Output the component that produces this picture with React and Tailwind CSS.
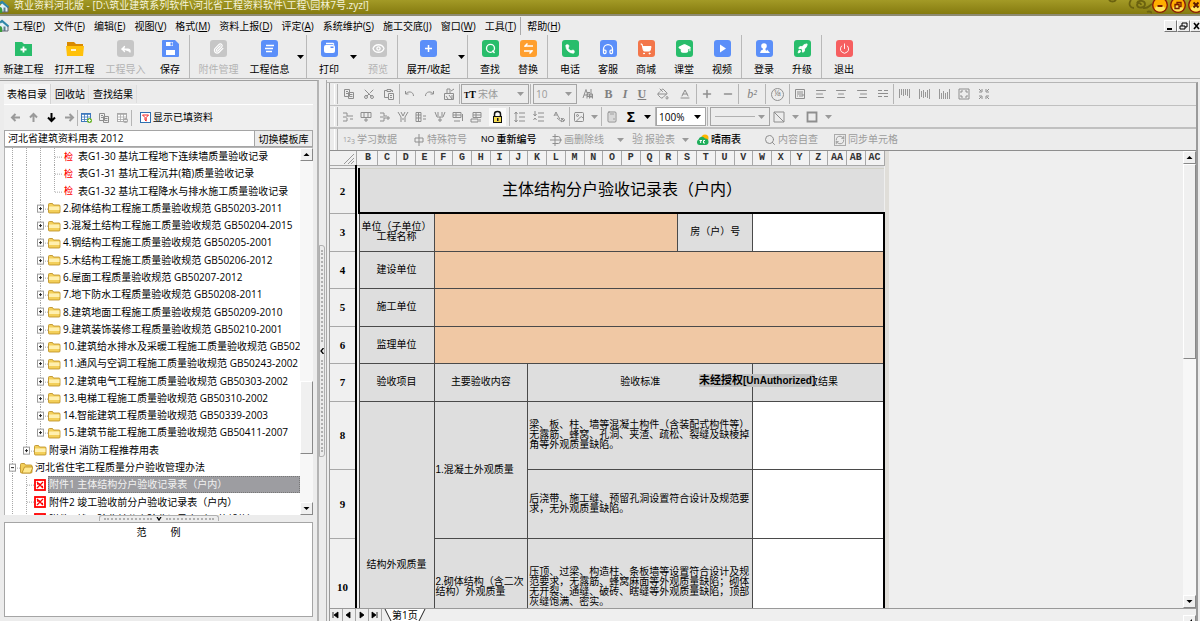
import React from "react";
import {
  Copy, Scissors, PaintBucket, Plus, Minus,
  AlignLeft, AlignCenter, AlignRight, Image, Calculator, Search, RefreshCw,
  Headphones, Rocket, Phone, ShoppingCart, GraduationCap, Power, Eye, Reply, Paperclip, Baseline,
} from "lucide-react";

const UI = "font-['Open_Sans','Noto_Sans_CJK_SC',sans-serif]";

/* ---------- shared pieces ---------- */

function Caret({ dim }) {
  return (
    <svg width="7" height="4" viewBox="0 0 7 4" className="shrink-0">
      <path d="M0 0h7L3.5 4z" fill={dim ? "#9a9a9a" : "#000"} />
    </svg>
  );
}

function HomeLogo() {
  return (
    <svg width="10" height="13" viewBox="3 0 10 13" className="shrink-0">
      <path d="M3 6 6 2l5 4v6H3z" fill="#e4f1f6" />
      <path d="M3 3.500 5 2l6.500 5.500" fill="none" stroke="#2d86a8" strokeWidth="2.200" />
      <path d="M3 7c2 0 3 3 2 6H3z" fill="#3c9a3c" />
      <path d="M6.500 7.500h2V12h-2z" fill="#5c7f90" />
      <path d="M11 7v5H5" stroke="#667" fill="none" />
    </svg>
  );
}

/* ---------- title bar ---------- */

function RoundButton({ label, children }) {
  return (
    <button aria-label={label} className="-mt-0.5 size-4 shrink-0">
      <svg width="16" height="16" viewBox="0 0 16 16">
        <circle cx="8" cy="7" r="7.300" fill="#ffae00" stroke="#8a1c08" strokeWidth="1.400" />
        <ellipse cx="8" cy="10.500" rx="5" ry="3" fill="#ffe45c" />
        {children}
      </svg>
    </button>
  );
}

function TitleBar() {
  return (
    <header className="flex h-4 shrink-0 items-start overflow-hidden border-b-2 border-[#8d8a72] bg-linear-to-b from-[#a39a26] to-[#857b0e] text-[10px] leading-[10px] text-[#f6f4dc]">
      <HomeLogo />
      <h1 className="flex-1 pl-1 leading-[10px] whitespace-nowrap">筑业资料河北版 - [D:\筑业建筑系列软件\河北省工程资料软件\工程\园林7号.zyzl]</h1>
      <svg width="44" height="14" viewBox="4 0 44 14" fill="none" stroke="#6b620f" strokeWidth="1.800" className="shrink-0">
        <path d="M5 0c2 2 5 2 7 0M27 0c-3 4-1 8 3 8M33 3c1-3 8-3 8 1s-7 5-8 1c0-2 4-3 4 0M39 8c5 1 6-2 9-4M43 12c2-1 4 0 5 1" />
      </svg>
      <div className="-mr-1 flex gap-0.5">
        <RoundButton label="最小化"><path d="M5.500 8h5" stroke="#7a1a00" strokeWidth="2" /></RoundButton>
        <RoundButton label="还原"><path d="M5 6.500h4v4H5zM7 6.500v-2h4v4H9" fill="none" stroke="#7a1a00" strokeWidth="1.300" /></RoundButton>
        <RoundButton label="关闭"><path d="m5.500 4.500 5 5m0-5-5 5" stroke="#5a1a00" strokeWidth="2" /></RoundButton>
      </div>
    </header>
  );
}

/* ---------- menu ---------- */

const MENUS = [
  ["工程", "P"], ["文件", "F"], ["编辑", "E"], ["视图", "V"], ["格式", "M"], ["资料上报", "D"],
  ["评定", "A"], ["系统维护", "S"], ["施工交底", "J"], ["窗口", "W"], ["工具", "T"], ["帮助", "H"],
];

function menuGap(key) {
  if (key === "H") return "border-l border-[#aaa] pl-1.5";
  return key === "T" ? "mr-1" : "mr-[9px]";
}

function MdiButton({ label, children }) {
  return (
    <button aria-label={label} className="h-3 w-[13px] border border-t-white border-r-[#777] border-b-[#777] border-l-white bg-[#ededed]">
      <svg width="11" height="10" viewBox="0 0 11 10" fill="none" stroke="#000">{children}</svg>
    </button>
  );
}

function MenuBar() {
  return (
    <nav className="flex h-[19px] shrink-0 items-center overflow-hidden text-[10px]">
      <HomeLogo />
      <ul className="flex flex-1 items-center pl-[3px]">
        {MENUS.map(([name, key]) => (
          <li key={name} className={menuGap(key)}>
            <button className="leading-[18px] whitespace-nowrap">
              {name}(<u>{key}</u>)
            </button>
          </li>
        ))}
      </ul>
      <div className="-mr-[3px] flex">
        <MdiButton label="最小化文档"><path d="M2 8h5" strokeWidth="2" /></MdiButton>
        <MdiButton label="还原文档"><path d="M2 5h5v3H2zM4 5V2h5v4H7" /></MdiButton>
        <MdiButton label="关闭文档"><path d="m3 2 5 6m0-6L3 8" strokeWidth="1.600" /></MdiButton>
      </div>
    </nav>
  );
}

/* ---------- main toolbar ---------- */

function Badge({ color, children }) {
  return (
    <span className={"flex size-[17px] items-center justify-center rounded-[3px] text-white " + color}>{children}</span>
  );
}

const GRAY = "bg-[#c6c6c6]";
const BLUE = "bg-[#5b8ff9]";
const GREEN = "bg-[#28bd6b]";
const S = { size: 11, strokeWidth: 2.5 };

const ICONS = {
  create: (
    <svg width="17" height="17" viewBox="0 0 17 17">
      <path d="M0 2h7l2 2h8v12H0z" fill="#28bd6b" />
      <path d="M8.500 6.500v6M5.500 9.500h6" stroke="#fff" strokeWidth="1.800" />
    </svg>
  ),
  open: (
    <svg width="18" height="17" viewBox="0 0 18 17">
      <path d="M1 2h7l2 2h7v4H1z" fill="#d98a00" />
      <path d="M0 6h18l-1 10H1z" fill="#ffc10a" />
      <path d="M5 10h5" stroke="#fff" strokeWidth="1.600" />
    </svg>
  ),
  import: <Badge color={GRAY}><Reply size={12} strokeWidth={2.5} fill="#fff" /></Badge>,
  save: (
    <svg width="17" height="17" viewBox="0 0 17 17">
      <path d="M1 0h12l4 4v12q0 1-1 1H1q-1 0-1-1V1q0-1 1-1z" fill="#5b8ff9" />
      <path d="M4 2h7v4H4zM4 10h9v5H4z" fill="#fff" />
      <path d="M8.500 2.500h2v3h-2z" fill="#5b8ff9" />
    </svg>
  ),
  attach: <Badge color={GRAY}><Paperclip {...S} /></Badge>,
  info: <Badge color={BLUE}><svg width="17" height="17" stroke="#fff" strokeWidth="1.400"><path d="M5 5.500h8M4 8.500h8M5 11.500h6" /></svg></Badge>,
  print: (
    <Badge color={BLUE}>
      <svg width="17" height="17" viewBox="0 0 17 17">
        <rect x="3" y="5" width="11" height="8" rx="2" fill="#fff" />
        <path d="M5 3.500h7l1 1" stroke="#fff" strokeWidth="1.300" fill="none" />
        <path d="M9.500 6.500h3v1.500h-3z" fill="#5b8ff9" />
      </svg>
    </Badge>
  ),
  preview: <Badge color={GRAY}><Eye size={13} strokeWidth={2.5} /></Badge>,
  expand: <Badge color={BLUE}><svg width="17" height="17" stroke="#fff" strokeWidth="1.500"><path d="M8.500 5v7M5 8.500h7" /></svg></Badge>,
  find: (
    <Badge color={GREEN}>
      <svg width="17" height="17" viewBox="0 0 17 17" fill="none" stroke="#fff" strokeWidth="1.300"><circle cx="8.500" cy="8.300" r="4" /><path d="m10.500 10.500 2 2.500" /></svg>
    </Badge>
  ),
  replace: (
    <Badge color="bg-[#ff9f2e]">
      <svg width="17" height="17" viewBox="0 0 17 17" fill="none" stroke="#fff" strokeWidth="1.500"><path d="M13 6H5M7.500 3.500 5 6v1M4 11h8M9.500 13.500 12 11v-1" /></svg>
    </Badge>
  ),
  phone: <Badge color={GREEN}><Phone size={10} fill="#fff" /></Badge>,
  service: <Badge color={BLUE}><Headphones size={12} strokeWidth={2.5} /></Badge>,
  shop: <Badge color="bg-[#f3764a]"><ShoppingCart size={12} fill="#fff" /></Badge>,
  course: <Badge color={GREEN}><GraduationCap size={13} fill="#fff" /></Badge>,
  video: <Badge color={BLUE}><svg width="17" height="17"><path d="M6 4.500 12 8.500l-6 4z" fill="#fff" /></svg></Badge>,
  login: (
    <Badge color={BLUE}>
      <svg width="17" height="17" viewBox="0 0 17 17" fill="#fff"><circle cx="8" cy="6" r="2.800" /><path d="M7 8h2.500v2L13 13H4l1-2.500 2-1z" /><path d="m11 9.500 3 3.500h-4z" /></svg>
    </Badge>
  ),
  upgrade: <Badge color={GREEN}><Rocket size={11} fill="#fff" /></Badge>,
  exit: <Badge color="bg-[#f65f60]"><Power {...S} strokeWidth={2} /></Badge>,
};

const TOOLS = [
  ["create", "新建工程"], ["open", "打开工程"], ["import", "工程导入", "off"], ["save", "保存"], "|",
  ["attach", "附件管理", "off"], ["info", "工程信息"], "v", "|",
  ["print", "打印"], "v", ["preview", "预览", "off"], "|",
  ["expand", "展开/收起"], "v", "|",
  ["find", "查找"], ["replace", "替换"], "|",
  ["phone", "电话"], ["service", "客服"], ["shop", "商城"], ["course", "课堂"], ["video", "视频"], "|",
  ["login", "登录"], ["upgrade", "升级"], "|",
  ["exit", "退出"],
];

function toolWidth(label) {
  if (label.length === 2) return "w-[38px]";
  return label.length === 4 ? "w-[51px]" : "w-[55px]";
}

function MainToolbar() {
  return (
    <div className="flex h-11 shrink-0 border-b border-[#b4b4b4] text-[10px]">
      <div className="-ml-0.5 flex">
        {TOOLS.map((t, i) => {
          if (t === "|") return <span key={i} className="w-1 shrink-0 border-l border-[#b9b9b9]" />;
          if (t === "v")
            return (
              <button key={i} aria-label="更多选项" className="flex w-[11px] shrink-0 items-center justify-center">
                <Caret />
              </button>
            );
          const [icon, label, off] = t;
          return (
            <button
              key={i}
              disabled={!!off}
              className={"flex shrink-0 flex-col items-center gap-1 pt-[5px] leading-[16px] whitespace-nowrap disabled:text-[#b3b3b3] " + toolWidth(label)}
            >
              {ICONS[icon]}
              {label}
            </button>
          );
        })}
      </div>
    </div>
  );
}

/* ---------- left panel ---------- */

function Guide({ kind }) {
  const box = kind[0] === "+" || kind[0] === "-";
  const last = kind.endsWith("L");
  return (
    <svg className="h-full w-3.5 shrink-0" fill="none" stroke="#a8a8a8">
      <line x1="6.5" y1="0%" x2="6.5" y2={last ? "50%" : "100%"} strokeDasharray="1 1" />
      {kind !== "|" && (
        <svg y="50%" overflow="visible">
          <path d="M7 .5h7" strokeDasharray="1 1" />
          {box && (
            <>
              <rect x="3.500" y="-3.500" width="6" height="7" fill="#fff" stroke="#9a9a9a" />
              <path d={kind[0] === "+" ? "M5 0h3M6.500-1.500v3" : "M5 0h3"} stroke="#222" />
            </>
          )}
        </svg>
      )}
    </svg>
  );
}

function Folder({ open }) {
  return (
    <svg width="13" height="12" viewBox="0 0 13 12" className="shrink-0" stroke="#b98a1c" strokeWidth=".8">
      <path d="M.5 10V2.500q0-1 1-1h3l1 1.500h5.500q1 0 1 1V10q0 1-1 1h-9.500q-1 0-1-1z" fill="#f3cf5a" />
      {open ? (
        <path d="M2 11 4.500 5H13l-2.500 6z" fill="#ffe991" />
      ) : (
        <path d="M1 4.500h10.500V8H1z" fill="#fff0b0" stroke="none" />
      )}
    </svg>
  );
}

function CheckMark() {
  return <span className="w-[13px] shrink-0 text-center text-[9px] font-medium text-[#f00]">检</span>;
}

function FormMark() {
  return (
    <svg width="13" height="12" viewBox="0 0 13 12" className="shrink-0" fill="none">
      <rect x="1" y="1" width="10" height="10" fill="#fff" stroke="#f00" strokeWidth="1.800" />
      <path d="m3 3 6 6M9 3 3 9M3 5h3M7 7.500h2" stroke="#f00" strokeWidth="1.300" />
    </svg>
  );
}

const CLAUSES = [
  "2.砌体结构工程施工质量验收规范 GB50203-2011",
  "3.混凝土结构工程施工质量验收规范 GB50204-2015",
  "4.钢结构工程施工质量验收规范 GB50205-2001",
  "5.木结构工程施工质量验收规范 GB50206-2012",
  "6.屋面工程质量验收规范 GB50207-2012",
  "7.地下防水工程质量验收规范 GB50208-2011",
  "8.建筑地面工程施工质量验收规范 GB50209-2010",
  "9.建筑装饰装修工程质量验收规范 GB50210-2001",
  "10.建筑给水排水及采暖工程施工质量验收规范 GB50242-2002",
  "11.通风与空调工程施工质量验收规范 GB50243-2002",
  "12.建筑电气工程施工质量验收规范 GB50303-2002",
  "13.电梯工程施工质量验收规范 GB50310-2002",
  "14.智能建筑工程质量验收规范 GB50339-2003",
  "15.建筑节能工程施工质量验收规范 GB50411-2007",
];

const TREE = [
  { g: ["|", "|", "|", "T"], icon: "check", t: "表G1-30 基坑工程地下连续墙质量验收记录" },
  { g: ["|", "|", "|", "T"], icon: "check", t: "表G1-31 基坑工程沉井(箱)质量验收记录" },
  { g: ["|", "|", "|", "TL"], icon: "check", t: "表G1-32 基坑工程降水与排水施工质量验收记录" },
  ...CLAUSES.map((t, i) => ({ g: ["|", "|", i === CLAUSES.length - 1 ? "+L" : "+"], icon: "folder", t })),
  { g: ["|", "+L"], icon: "folder", t: "附录H 消防工程推荐用表" },
  { g: ["-"], icon: "open", t: "河北省住宅工程质量分户验收管理办法" },
  { g: ["|", "T"], icon: "form", t: "附件1 主体结构分户验收记录表（户内）", sel: true },
  { g: ["|", "T"], icon: "form", t: "附件2 竣工验收前分户验收记录表（户内）" },
  { g: ["|", "T"], icon: "form", t: "附件3 竣工验收前分户验收记录表（公共部位）" },
];

const TREE_ICONS = { check: <CheckMark />, folder: <Folder />, open: <Folder open />, form: <FormMark /> };

function ScrollButton({ dir, label }) {
  const d = dir === "up" ? "M2.500 7h6L5.500 4z" : dir === "down" ? "M2.500 4h6l-3 3z" : "M8 3v5H3z";
  return (
    <button aria-label={label} className="h-[13px] w-full shrink-0 border border-t-white border-r-[#888] border-b-[#888] border-l-white bg-[#f0f0f0]">
      <svg width="11" height="11" viewBox="0 0 11 11" className="block"><path d={d} /></svg>
    </button>
  );
}

function TinyButton({ label, children }) {
  return (
    <button aria-label={label} className="flex shrink-0 items-center justify-center">
      {children}
    </button>
  );
}

function Arrow({ rot, dark }) {
  return (
    <svg width="11" height="11" viewBox="0 0 11 11" fill="none" stroke={dark ? "#000" : "#9a9a9a"} strokeWidth="2">
      <path d="M10 5.500H2M5.500 2 2 5.500 5.500 9" transform={`rotate(${rot} 5.5 5.5)`} />
    </svg>
  );
}

function GridIcon({ on }) {
  return (
    <svg width="11" height="11" viewBox="0 0 11 11" fill="none" stroke={on ? "#3f78bd" : "#aaa"}>
      <rect x=".5" y="1.500" width="9" height="8" fill="#fff" />
      <path d="M0 2h10" strokeWidth="1.600" />
      <path d="M0 5h10M0 7.500h10M3.500 2v8M6.500 2v8" strokeWidth=".8" />
      <circle cx="8.500" cy="8.500" r="2.500" fill={on ? "#6cb52d" : "#aaa"} stroke="none" />
      <path d={on ? "M7 8.500h3M8.500 7v3" : "M7 8.500h3"} stroke="#fff" strokeWidth=".8" />
    </svg>
  );
}

function LeftPanel() {
  return (
    <aside className="flex w-[319px] shrink-0 flex-col border-t border-r-2 border-t-[#a0a0a0] border-r-[#b4b4b4] pt-[3px] pr-1 pb-1 pl-1 text-[10px]">
      <div role="tablist" className="flex h-5 shrink-0 items-center">
        {["表格目录", "回收站", "查找结果"].map((t, i) => (
          <button
            key={t}
            role="tab"
            aria-selected={i === 0}
            className={
              "mr-px border-r px-[3px] whitespace-nowrap " +
              (i === 0 ? "h-5 border-[#d4d4d4] bg-[#f4f4f4]" : "h-[18px] border-[#dedede] bg-[#eaeaea]")
            }
          >
            {t}
          </button>
        ))}
      </div>

      <div className="flex h-[26px] shrink-0 items-center border-t border-white bg-[#efefef] pl-1.5">
        <div className="flex w-[65px] justify-between">
          <TinyButton label="后退"><Arrow rot={0} /></TinyButton>
          <TinyButton label="上移"><Arrow rot={90} /></TinyButton>
          <TinyButton label="下移"><Arrow rot={-90} dark /></TinyButton>
          <TinyButton label="前进"><Arrow rot={180} /></TinyButton>
        </div>
        <span className="ml-0.5 h-4 border-l border-[#b5b5b5]" />
        <div className="flex w-[53px] justify-around">
          <TinyButton label="新建表格"><GridIcon on /></TinyButton>
          <TinyButton label="复制表格"><Draw d={COPY} /></TinyButton>
          <TinyButton label="删除表格"><GridIcon /></TinyButton>
        </div>
        <span className="h-4 border-l border-[#b5b5b5]" />
        <button className="ml-2 flex items-center gap-0.5 whitespace-nowrap">
          <svg width="11" height="11" viewBox="0 0 11 11" fill="none">
            <rect x=".5" y=".5" width="10" height="10" fill="#fff" stroke="#2f6fb0" />
            <path d="M2.500 3h6L6.200 5.500V9L5 8V5.500z" stroke="#e22" />
          </svg>
          显示已填资料
        </button>
      </div>

      <div className="flex h-[17px] shrink-0 border border-[#a5a5a5]">
        <input aria-label="模板库" defaultValue="河北省建筑资料用表 2012" className="min-w-0 flex-1 bg-white px-[3px] outline-none" />
        <button className="w-[58px] shrink-0 border-l border-[#a5a5a5] leading-[14px]">切换模板库</button>
      </div>

      <div className="flex min-h-0 flex-1 border-t border-l border-[#b5b5b5] bg-white">
        <ul role="tree" className="min-h-0 min-w-0 flex-1 overflow-hidden pl-px">
          <div className="grid h-[380px] auto-rows-fr">
            {TREE.map((n) => (
              <li key={n.t} role="treeitem" className="flex min-h-0 items-center overflow-hidden whitespace-nowrap">
                {n.g.map((k, i) => <Guide key={i} kind={k} />)}
                {TREE_ICONS[n.icon]}
                <span
                  className={
                    n.sel
                      ? "ml-px flex-1 border border-dotted border-[#777] bg-[#9d9da1] leading-[15px] text-[#f2f2f2]"
                      : n.icon === "check" ? "pl-[3px]" : "pl-0.5"
                  }
                >
                  {n.t}
                </span>
              </li>
            ))}
          </div>
        </ul>
        <div className="flex w-[13px] shrink-0 flex-col bg-[#f7f7f7]">
          <ScrollButton dir="up" label="向上滚动" />
          <div className="grow-[221]" />
          <div className="grow-[72] border border-t-white border-r-[#888] border-b-[#888] border-l-white bg-[#f0f0f0]" />
          <div className="grow-[48]" />
          <ScrollButton dir="down" label="向下滚动" />
        </div>
      </div>

      <div className="flex h-[7px] shrink-0 justify-center">
        <button aria-label="折叠范例" className="flex h-[6px] w-[120px] items-center justify-between rounded-t-[3px] border border-b-0 border-[#b0b0b0] px-1">
          <span className="w-12 border-t-2 border-dotted border-[#b0b0b0]" />
          <svg width="6" height="4" fill="none" stroke="#000" strokeWidth="1.300"><path d="m1 0 2 3 2-3" /></svg>
          <span className="w-12 border-t-2 border-dotted border-[#b0b0b0]" />
        </button>
      </div>

      <section className="flex h-[95px] shrink-0 justify-center gap-6 border border-[#a5a5a5] bg-white pt-px leading-4">
        <span>范</span>
        <span>例</span>
      </section>
    </aside>
  );
}

function SideSplitter() {
  return (
    <div className="flex w-2 shrink-0 items-center border-r border-[#a8a8a8] bg-[#ececec]">
      <button aria-label="折叠侧栏" className="flex h-[212px] w-[6px] flex-col items-center justify-between rounded-r-[3px] border border-[#b0b0b0] py-1">
        <span className="h-[92px] border-l-2 border-dotted border-[#b0b0b0]" />
        <svg width="4" height="6" fill="none" stroke="#000" strokeWidth="1.300"><path d="M3.500 0 1 3l2.500 3" /></svg>
        <span className="h-[92px] border-l-2 border-dotted border-[#b0b0b0]" />
      </button>
    </div>
  );
}

/* ---------- sheet toolbars ---------- */

const I = { size: 12, strokeWidth: 2, color: "#8e8e8e" };

function Draw({ d, w = 1 }) {
  return (
    <svg width="12" height="12" viewBox="0 0 12 12" fill="none" stroke="#8e8e8e" strokeWidth={w}>
      <path d={d} />
    </svg>
  );
}

function Glyph({ children, className = "" }) {
  return <span className={"font-['Liberation_Serif',serif] text-[12px] leading-3 text-[#808080] " + className}>{children}</span>;
}

function Group({ width, items, line = true }) {
  return (
    <div className={"flex shrink-0 items-center justify-around " + width + (line ? " border-r border-[#b5b5b5]" : "")}>
      {items.map(([label, icon], i) => (
        <TinyButton key={i} label={label}>{icon}</TinyButton>
      ))}
    </div>
  );
}

function Grip() {
  return <span className="mr-px ml-1 w-1 shrink-0 border-r border-l border-r-[#b5b5b5] border-l-white" />;
}

function Combo({ label, value, width, live, lead }) {
  return (
    <label className={"flex shrink-0 items-center border border-[#a5a5a5] pr-1 " + width + (live ? " bg-white" : " bg-[#ececec] text-[#9a9a9a]")}>
      {lead}
      <select aria-label={label} className="min-w-0 flex-1 appearance-none bg-transparent pl-0.5 text-[10px] leading-4 outline-none">
        <option>{value}</option>
      </select>
      <Caret dim={!live} />
    </label>
  );
}

const caretOff = ["下拉", <Caret dim />];
const COPY = "M1.500 1.500h5v7h-5zM3 3.500h2M3 5.500h2M5.500 4.500h5v6h-5zM7 6.500h2.500M7 8.500h2.500";
const PASTE = "M4 2.500H1.500v7H5M8 2.500h1.500V4M4 1.500h4v2H4zM5.500 5.500h5v6h-5zM7 7.500h2M7 9.500h2";

function FormatBar() {
  return (
    <div className="flex h-[23px] shrink-0 items-stretch border-b border-[#c0c0c0] py-px">
      <Grip />
      <Group width="w-[61px]" items={[["复制", <Draw d={COPY} />], ["剪切", <Scissors {...I} className="-rotate-90" />], ["粘贴", <Draw d={PASTE} />]]} />
      <Group
        width="w-[60px]"
        items={[
          ["撤销", <Draw d="M1.500 3v3h3M1.500 6c2-3 8-3 8 2" />],
          ["重做", <Draw d="M10.500 3v3h-3M10.500 6c-2-3-8-3-8 2" />],
          ["清除", <Draw d="M1.500 5.500h9v6h-9zM4 5V1h3v4M8 3l3-2M3 8l2 3M6 7l3 4M9 7v4" />],
        ]}
      />
      <span className="w-px" />
      <Combo label="字体" value="宋体" width="w-[68px]" lead={<span className="pl-0.5 font-['Liberation_Serif',serif] text-[8px] font-bold text-black">T<span className="text-[10px]">T</span></span>} />
      <span className="mr-0.5 w-0.5 border-r border-[#b5b5b5]" />
      <Combo label="字号" value="10" width="w-[44px]" />
      <Group
        width="w-[120px]"
        items={[
          ["字符", <Draw d="M1 10 4 1.500 6 8M2 7h3M5 4.500h3M5 10.500V6h5.500v4.500M7.500 6v4.500M5 8.500h5M9 1v9" />],
          ["加粗", <Glyph className="font-bold">B</Glyph>],
          ["倾斜", <Glyph className="font-bold italic">I</Glyph>],
          ["下划线", <Glyph className="font-bold underline">U</Glyph>],
          ["填充颜色", <PaintBucket {...I} />],
          ["字体颜色", <Baseline {...I} />],
        ]}
      />
      <Group width="w-[42px]" items={[["增大", <Plus {...I} strokeWidth={3} />], ["减小", <Minus {...I} strokeWidth={3} />]]} />
      <Group width="w-[27px]" items={[["上标", <Glyph className="italic">b²</Glyph>]]} />
      <Group
        width="w-[24px]"
        items={[["分数", <span className="flex size-[13px] items-center justify-center rounded-full border border-[#909090] font-['Liberation_Serif',serif] text-[8px] leading-none text-[#808080]">⅟a</span>]]}
      />
      <Group
        width="w-[104px]"
        items={[
          ["自动换行", <Draw d="M1.500 1.500h9v9h-9zM3 4h6M3 6h6v2H5M3 8h1" />],
          ["左对齐", <AlignLeft {...I} />], ["居中", <AlignCenter {...I} />], ["右对齐", <AlignRight {...I} />],
          ["分散对齐", <Draw d="M1 2.500h4M7 2.500h4M1 5.500h10M1 8.500h4M7 8.500h4" />],
        ]}
      />
      <Group
        width="w-[100px]"
        line={false}
        items={[
          ["顶端对齐", <Draw d="M1.500 1v9M3.500 1v6M5.500 1v7M7.500 1v6M9.500 1v7M11.500 1v9" w={0.9} />],
          ["垂直居中", <Draw d="M1.500 1v10M3.500 3v6M5.500 2v8M7.500 4v5M9.500 2v8M11.500 1v10" w={0.9} />],
          ["底端对齐", <Draw d="M1.500 1v10M3.500 5v6M5.500 3v8M7.500 5v6M9.500 4v7M11.500 1v10" w={0.9} />],
          ["放大", <Draw d="M1 1h10v10H1zM3 5V3h2M7 3h2v2M9 7v2H7M5 9H3V7" />],
          ["缩小", <Draw d="M1 4h3V1M8 1v3h3M11 8H8v3M4 11V8H1M1 1l2 2M11 1 9 3M11 11 9 9M1 11l2-2" />],
        ]}
      />
    </div>
  );
}

function CellBar() {
  return (
    <div className="flex h-[23px] shrink-0 items-stretch border-b-2 border-[#c0c0c0] py-px">
      <Grip />
      <Group
        width="w-[171px]"
        items={[
          ["插入行", <Draw d="M1 2h4v3h3M1 10h4V7M1 6h4M8 5h3M8 8h3" />],
          ["插入列", <Draw d="M1 1.500h10v5H1zM4 1v5M8 1v5M6 7v4M4 9h4" />],
          ["删除行", <Draw d="M1 2h4v3h3M1 10h4V7h6M1 6h4M9 5v4" />],
          ["合并", <Draw d="M1 1l3 5v5M11 1 8 6v5M4 1l2 4 2-4M5 8h2" />],
          ["拆分", <Draw d="M1 1.500h5v9H1zM1 4h5M1 7h5M8 5h3M8 8h3M3.500 1v9" />],
          ["分列", <Draw d="M1 1l2 5h6l2-5M4 1v4M8 1v4M6 6v5M4 9h4" />],
          ["行高", <Draw d="M1 1.500h8v5H1zM1 4h8M4 1v5M2 10h6M10.500 3v7" />],
          ["列宽", <Draw d="M3 1.500h8v5H3zM3 4h8M6 1v5M1 8h7v3H1zM10 8v3" />],
          [
            "锁定",
            <svg width="17" height="18" viewBox="1 0 17 18" className="bg-[#fafafa]">
              <path d="M6.500 9V6q0-2.500 3-2.500t3 2.500v3" fill="none" stroke="#111" strokeWidth="1.500" />
              <rect x="5.500" y="8.500" width="8" height="6" fill="#f5dc50" stroke="#111" />
              <path d="M9 10h1.500v3H9z" fill="#113" />
            </svg>,
          ],
        ]}
      />
      <Group
        width="w-[60px]"
        items={[
          ["行距增大", <Draw d="M5 2h6M5 6h6M5 10h6M2 1v10M.5 3 2 1l1.500 2M.5 9 2 11l1.500-2" />],
          ["行距减小", <Draw d="M5 2h6M5 6h6M5 10h6M2 0v4M.5 3 2 5l1.500-2M.5 9 2 7l1.500 2" />],
          ["文字方向", <Draw d="M1 5l2-4 2 4M2 4h2M5 5l2 3M8 7l3 3M10 7.500a1.500 1.500 0 1 0 .1 0M4 7l5 4" />],
        ]}
      />
      <Group width="w-[32px]" items={[["插入图片", <Image {...I} />], caretOff]} />
      <Group
        width="w-[54px]"
        items={[["公式", <Calculator {...I} />], ["求和", <span className="text-[14px] leading-3 font-bold text-black">Σ</span>], ["求和选项", <Caret />]]}
      />
      <Combo label="缩放" value="100%" width="w-[50px]" live />
      <span className="mr-0.5 w-0.5 border-r border-[#b5b5b5]" />
      <button aria-label="线型" className="flex w-[60px] shrink-0 items-center justify-between border border-[#a5a5a5] px-1">
        <span className="w-10 border-t border-[#b0b0b0]" />
        <Caret dim />
      </button>
      <Group
        width="w-[65px]"
        line={false}
        items={[["斜线", <Draw d="M1 1h10v10M1 1l10 10M1 1v10h10" />], caretOff, ["边框", <Draw d="M1.500 1.500h9v9h-9z" w={1.8} />], caretOff]}
      />
    </div>
  );
}

function ActionButton({ width, icon, label, on }) {
  return (
    <button className={"flex shrink-0 items-center gap-0.5 whitespace-nowrap " + width + (on ? " text-black" : " text-[#9c9c9c]")}>
      {icon}
      {label}
    </button>
  );
}

function ActionBar() {
  return (
    <div className="flex h-[22px] shrink-0 items-stretch border-b border-[#8e8e8e] text-[10px]">
      <Grip />
      <span className="w-1" />
      <ActionButton
        width="w-[70px]"
        icon={<span className="flex items-center text-[7px] leading-none"><span>1</span><span>2</span><span className="pt-1">3</span></span>}
        label="学习数据"
      />
      <ActionButton width="w-[68px]" icon={<Draw d="M6 0v12M2 4h8v4H2z" />} label="特殊符号" />
      <ActionButton width="w-[69px]" on icon={<span className="font-['Liberation_Sans'] text-[9px]">NO</span>} label={<b className="font-medium">重新编号</b>} />
      <ActionButton width="w-[67px]" icon={<Draw d="M2.500 2.500h6q2 0 2 3.500t-2 3.500h-6M5 0v12M0 6h12" />} label="画删除线" />
      <TinyButton label="画删除线选项"><Caret dim /></TinyButton>
      <span className="w-2" />
      <ActionButton width="w-[50px]" icon={<span className="text-[11px]">验</span>} label="报验表" />
      <TinyButton label="报验表选项"><Caret dim /></TinyButton>
      <span className="w-[7px]" />
      <ActionButton
        width="w-[68px]"
        on
        icon={
          <svg width="13" height="12" viewBox="0 0 13 12">
            <circle cx="9" cy="4" r="3.500" fill="#ffb400" />
            <path d="M3 11a3 3 0 0 1-.5-5.500A3.500 3.500 0 0 1 9 4.500a3.300 3.300 0 0 1 1 6.500z" fill="#1fae5b" />
            <path d="M3.500 6.500h2.500M4.700 6.500V9M9 6.500H7.500V9H9" fill="none" stroke="#fff" />
          </svg>
        }
        label={<b className="font-medium">晴雨表</b>}
      />
      <ActionButton width="w-[70px]" icon={<Search {...I} />} label="内容自查" />
      <ActionButton width="w-[70px]" icon={<span className="border border-[#aaa]"><RefreshCw {...I} size={10} /></span>} label="同步单元格" />
    </div>
  );
}

/* ---------- sheet ---------- */

const COLS = [..."BCDEFGHIJKLMNOPQRSTUVWXYZ", "AA", "AB", "AC"];
const LINE = "border border-[#4a4a4a] ";
const HEAD = LINE + "bg-[#dedede] text-center font-normal";
const NOTE = LINE + "bg-[#dedede] px-px text-left font-normal whitespace-nowrap";
const FILL = LINE + "bg-[#f0c8a4]";
const BLANK = LINE + "border-r-2 border-r-black bg-white";

function RowNo({ n }) {
  return (
    <>
      <th scope="row" className="border-r-2 border-b border-r-black border-b-[#a8a8a8] bg-[#f0f0f0] text-center font-['Liberation_Serif',serif] text-[11px] font-bold">{n}</th>
      <td className="bg-[#f0f0f0]" />
    </>
  );
}

function Lines({ rows }) {
  return rows.map((r, i) => <span key={i} className="block">{r}</span>);
}

function Sheet() {
  return (
    <div className="relative min-w-0 flex-1 overflow-hidden bg-[#efefef]">
      <div className="w-fit border-r-4 border-[#e0ded9]">
        <table className="w-[555px] table-fixed border-collapse font-['Liberation_Sans','Noto_Sans_CJK_SC',sans-serif] text-[10px] leading-[10px]">
          <colgroup>
            <col className="w-[26px]" />
            <col className="w-[3px]" />
            {COLS.map((c) => <col key={c} />)}
          </colgroup>
          <thead>
            <tr className="h-[14px]">
              <th className="border-r border-b border-[#a8a8a8] bg-[#f0f0f0]">
                <svg width="24" height="12" viewBox="0 0 24 12" stroke="#999" className="block"><path d="m14 12 10-10M18 12l6-6M21 12l3-3" /></svg>
              </th>
              <th className="border-b border-[#a8a8a8] bg-[#f2f2f2]" />
              {COLS.map((c) => (
                <th key={c} scope="col" className="border-r border-b border-[#a8a8a8] bg-[#f2f2f2] p-0 text-center font-['Liberation_Mono',monospace] font-bold text-[#333]">{c}</th>
              ))}
            </tr>
          </thead>
          <tbody>
            <tr className="h-[3px]">
              <th className="border-r-2 border-b border-r-black border-b-[#a8a8a8] p-0" />
              <td className="p-0" />
              <td colSpan={28} className="border-b border-[#d2d2c8] bg-[#dedede] p-0" />
            </tr>
            <tr className="h-[45px]">
              <RowNo n="2" />
              <td colSpan={28} className="border-b-2 border-l-2 border-black bg-[#dedede] text-center text-[16px]">主体结构分户验收记录表（户内）</td>
            </tr>
            <tr className="h-[38px]">
              <RowNo n="3" />
              <th colSpan={4} className={HEAD}><Lines rows={["单位（子单位）", "工程名称"]} /></th>
              <td colSpan={13} className={FILL} />
              <th colSpan={4} className={HEAD}>房（户）号</th>
              <td colSpan={7} className={BLANK} />
            </tr>
            {[["4", "建设单位", "h-[37px]"], ["5", "施工单位", "h-[38px]"], ["6", "监理单位", "h-[37px]"]].map(([n, t, h]) => (
              <tr key={n} className={h}>
                <RowNo n={n} />
                <th colSpan={4} className={HEAD}>{t}</th>
                <td colSpan={24} className={FILL + " border-r-2 border-r-black"} />
              </tr>
            ))}
            <tr className="h-[38px]">
              <RowNo n="7" />
              <th colSpan={4} className={HEAD}>验收项目</th>
              <th colSpan={5} className={HEAD}>主要验收内容</th>
              <th colSpan={12} className={HEAD}>验收标准</th>
              <th colSpan={7} className={HEAD + " border-r-2 border-r-black"}>验收结果</th>
            </tr>
            <tr className="h-[68px]">
              <RowNo n="8" />
              <th colSpan={4} rowSpan={4} className={HEAD}>结构外观质量</th>
              <td colSpan={5} rowSpan={2} className={NOTE}>1.混凝土外观质量</td>
              <td colSpan={12} className={NOTE}>
                <Lines rows={["梁、板、柱、墙等混凝土构件（含装配式构件等）", "无露筋、蜂窝、孔洞、夹渣、疏松、裂缝及缺棱掉", "角等外观质量缺陷。"]} />
              </td>
              <td colSpan={7} className={BLANK} />
            </tr>
            <tr className="h-[69px]">
              <RowNo n="9" />
              <td colSpan={12} className={NOTE}>
                <Lines rows={["后浇带、施工缝、预留孔洞设置符合设计及规范要", "求，无外观质量缺陷。"]} />
              </td>
              <td colSpan={7} className={BLANK} />
            </tr>
            <tr className="h-[98px]">
              <RowNo n="10" />
              <td colSpan={5} className={NOTE}><Lines rows={["2.砌体结构（含二次", "结构）外观质量"]} /></td>
              <td colSpan={12} className={NOTE}>
                <Lines rows={["压顶、过梁、构造柱、条板墙等设置符合设计及规", "范要求，无露筋、蜂窝麻面等外观质量缺陷；砌体", "无开裂、通缝、破砖、瞎缝等外观质量缺陷，顶部", "灰缝饱满、密实。"]} />
              </td>
              <td colSpan={7} className={BLANK} />
            </tr>
            <tr className="h-[93px]">
              <RowNo n="" />
              <td colSpan={5} className={NOTE} />
              <td colSpan={12} className={NOTE} />
              <td colSpan={7} className={BLANK} />
            </tr>
          </tbody>
        </table>
      </div>
      <span className="absolute top-[223px] left-[369px] bg-[#c3c3c3] font-['Liberation_Sans','Noto_Sans_CJK_SC',sans-serif] text-[10px] leading-3 font-bold whitespace-nowrap">
        <span className="text-[11px]">未经授权</span>[UnAuthorized]
      </span>
    </div>
  );
}

const PAGERS = [
  ["首页", "M3 2v6M8 2v6L4 5z"], ["上一页", "M7 2v6L3 5z"], ["下一页", "M4 2v6l4-3z"], ["末页", "M8 2v6M3 2v6l4-3z"],
];

function SheetTabs() {
  return (
    <div className="flex h-[13px] shrink-0 border-t border-[#999] bg-[#efefef]">
      {PAGERS.map(([label, d]) => (
        <button key={label} aria-label={label} className="w-[13px] shrink-0 border-r border-[#a8a8a8]">
          <svg width="11" height="10" viewBox="0 0 11 10" stroke="#000" strokeWidth=".8"><path d={d} /></svg>
        </button>
      ))}
      <svg width="8" height="12" viewBox="0 0 8 12" className="ml-0.5 shrink-0"><path d="M1 0l6 12h1V0z" fill="#fff" /><path d="M1 0l6 12" stroke="#222" /></svg>
      <button className="shrink-0 bg-white text-[10px] leading-3 whitespace-nowrap">第1页</button>
      <svg width="8" height="12" viewBox="0 0 8 12" className="shrink-0"><path d="M7 0 1 12H0V0z" fill="#fff" /><path d="M7 0 1 12" stroke="#222" /></svg>
      <span className="flex-1" />
      <span className="w-[13px]"><ScrollButton dir="corner" label="调整大小" /></span>
    </div>
  );
}

function RightPanel() {
  return (
    <main className="mt-0.5 mr-0.5 flex min-w-0 flex-1 flex-col border-t border-r-2 border-t-[#b5b5b5] border-r-[#9a9a9a] pl-0.5">
      <div className="flex min-h-0 flex-1 flex-col border-l border-[#999]">
        <FormatBar />
        <CellBar />
        <ActionBar />
        <div className="flex min-h-0 flex-1">
          <Sheet />
          <div className="flex w-[13px] shrink-0 flex-col bg-[#f7f7f7]">
            <ScrollButton dir="up" label="向上滚动" />
            <div className="grow-[194] border border-t-white border-r-[#888] border-b-[#888] border-l-white bg-[#f0f0f0]" />
            <div className="grow-[238]" />
            <ScrollButton dir="down" label="向下滚动" />
          </div>
        </div>
        <SheetTabs />
      </div>
    </main>
  );
}

export default function App() {
  return (
    <div lang="zh-CN" className={"flex h-screen flex-col overflow-hidden bg-[#ececec] text-black " + UI}>
      <TitleBar />
      <MenuBar />
      <MainToolbar />
      <div className="flex min-h-0 flex-1 pt-px">
        <LeftPanel />
        <SideSplitter />
        <RightPanel />
      </div>
    </div>
  );
}
